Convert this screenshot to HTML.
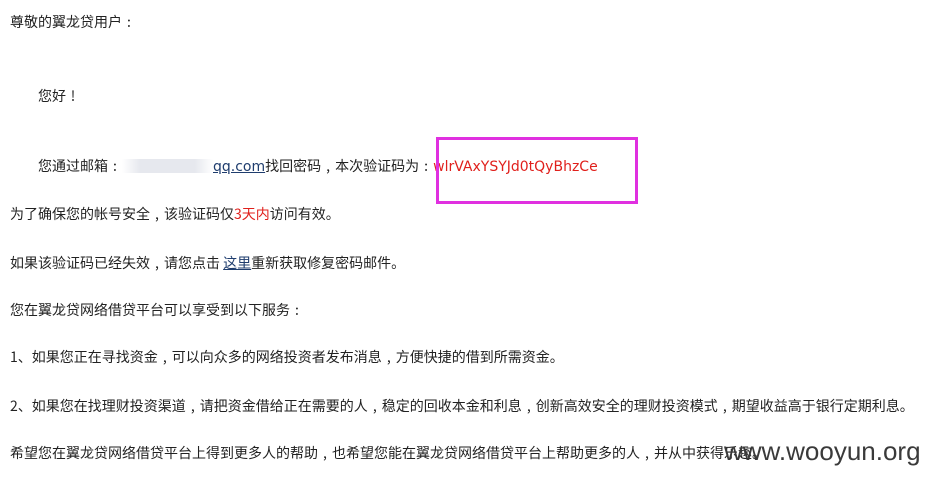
<!DOCTYPE html>
<html><head><meta charset="utf-8"><style>
body{margin:0;width:930px;height:478px;background:#fff;position:relative;overflow:hidden;font-family:"WenQuanYi Zen Hei","Noto Sans CJK SC",sans-serif;font-size:14px;color:#222}
.l{position:absolute;line-height:18px;white-space:nowrap}
.r{color:#e0201c}
.d{font-family:"DejaVu Sans",sans-serif;font-size:14px}
i{display:inline-block;width:14px;font-style:normal;text-align:center}
a{color:#1f3d6e;text-decoration:underline}
</style></head><body>
<div class="l" style="left:10px;top:13px">尊敬的翼龙贷用户<i>:</i></div>
<div class="l" style="left:38px;top:87px">您好<i>!</i></div>
<div class="l" style="left:38px;top:157px">您通过邮箱<i>:</i><a><span style="display:inline-block;width:91px;height:14px;background:linear-gradient(90deg,#fff,#e6e8ee 20%,#e6e8ee 80%,#fff);vertical-align:-2px"></span><span class="d">qq.com</span></a>找回密码<i>,</i>本次验证码为<i>:</i><span class="r d">wlrVAxYSYJd0tQyBhzCe</span></div>
<div style="position:absolute;left:436px;top:137px;width:196px;height:61px;border:3px solid #e030e0"></div>
<div class="l" style="left:10px;top:205px">为了确保您的帐号安全<i>,</i>该验证码仅<span class="r">3天内</span>访问有效<i>。</i></div>
<div class="l" style="left:10px;top:254px">如果该验证码已经失效<i>,</i>请您点击 <a>这里</a>重新获取修复密码邮件<i>。</i></div>
<div class="l" style="left:10px;top:301px">您在翼龙贷网络借贷平台可以享受到以下服务<i>:</i></div>
<div class="l" style="left:10px;top:348px">1<i>、</i>如果您正在寻找资金<i>,</i>可以向众多的网络投资者发布消息<i>,</i>方便快捷的借到所需资金<i>。</i></div>
<div class="l" style="left:10px;top:397px">2<i>、</i>如果您在找理财投资渠道<i>,</i>请把资金借给正在需要的人<i>,</i>稳定的回收本金和利息<i>,</i>创新高效安全的理财投资模式<i>,</i>期望收益高于银行定期利息<i>。</i></div>
<div class="l" style="left:10px;top:444px">希望您在翼龙贷网络借贷平台上得到更多人的帮助<i>,</i>也希望您能在翼龙贷网络借贷平台上帮助更多的人<i>,</i>并从中获得乐趣<i>。</i></div>
<div class="l" style="left:724px;top:436px;font-family:'Liberation Sans',sans-serif;font-size:26px;line-height:30px;color:#3a3a3a">www.wooyun.org</div>
</body></html>
